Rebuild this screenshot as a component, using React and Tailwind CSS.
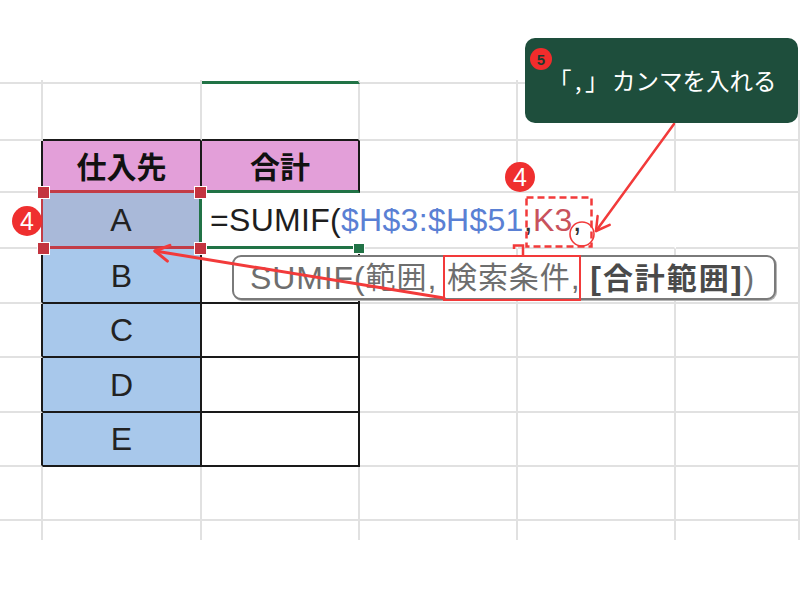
import React from 'react';

const LATIN = "font-['Liberation_Sans','Noto_Sans_CJK_JP',sans-serif]";
const JP = "font-['Noto_Sans_CJK_JP',sans-serif]";

// border colour / width classes per side, written out in full
const RC = {
  g: 'border-r-[#e1e1e1]',
  k: 'border-r-[#1a1a1a]',
  red: 'border-r-[#c33c46]',
  grn: 'border-r-[#217346]',
  none: 'border-r-transparent',
};
const BC = {
  g: 'border-b-[#e1e1e1]',
  k: 'border-b-[#1a1a1a]',
  red: 'border-b-[#c33c46]',
  grn: 'border-b-[#217346]',
  none: 'border-b-transparent',
};
const RW = { 2: 'border-r-2', 3: 'border-r-[3px]' };
const BW = { 0: 'border-b-0', 2: 'border-b-2', 3: 'border-b-[3px]' };

const cellClass = ({ r = 'g', b = 'g', rw = 2, bw = 2, bg = '' } = {}) =>
  `${RW[rw]} ${RC[r]} ${BW[bw]} ${BC[b]} ${bg}`;

const BLUE = 'bg-[#a8c8eb]';
const PINK = 'bg-[#e39fd9]';

const bodyRow = [{ r: 'k' }, { r: 'k', b: 'k', bg: BLUE }, { r: 'k', b: 'k' }, {}, {}, {}];

const rows = [
  [{}, {}, { b: 'grn', bw: 3 }, {}, {}, {}],
  [{}, { b: 'k' }, { b: 'k' }, {}, {}, {}],
  [{ r: 'k' }, { r: 'k', b: 'red', bw: 3, bg: PINK }, { r: 'k', b: 'grn', bw: 3, bg: PINK }, {}, {}, {}],
  [
    { r: 'red' },
    { r: 'grn', rw: 3, b: 'red', bw: 3, bg: 'bg-[#a9b9d9]' },
    { r: 'none', b: 'grn', bw: 3 },
    { r: 'none' },
    { r: 'none' },
    {},
  ],
  bodyRow,
  bodyRow,
  bodyRow,
  bodyRow,
  [{}, {}, {}, {}, {}, {}],
  [{ bw: 0 }, { bw: 0 }, { bw: 0 }, { bw: 0 }, { bw: 0 }, { bw: 0 }],
];

const Formula = () => (
  <div className={`relative z-10 flex h-full items-center whitespace-nowrap pl-[8px] text-[32px] tracking-[0.3px] ${LATIN}`}>
    <span className="text-[#1e1e1e]">=SUMIF(</span>
    <span className="text-[#5a80d4]">$H$3:$H$51</span>
    <span className="text-[#333]">,</span>
    <span className="text-[#c8525c]">K3</span>
    <span className="text-[#333]">,</span>
    <span className="mt-[6px] inline-block h-[50px] w-[7px] bg-[#c8c8c8]" />
  </div>
);

const Letter = ({ children }) => (
  <div className={`flex h-full items-center justify-center text-[32px] text-[#222] ${LATIN}`}>{children}</div>
);

const Head = ({ children }) => (
  <div className={`flex h-full items-center justify-center text-[30px] font-bold text-[#111] ${JP}`}>{children}</div>
);

const content = {
  '2-1': <Head>仕入先</Head>,
  '2-2': <Head>合計</Head>,
  '3-1': <Letter>A</Letter>,
  '3-2': <Formula />,
  '4-1': <Letter>B</Letter>,
  '5-1': <Letter>C</Letter>,
  '6-1': <Letter>D</Letter>,
  '7-1': <Letter>E</Letter>,
};

const Handle = ({ x, y }) => (
  <div
    className="absolute h-[13px] w-[13px] border-[1.5px] border-white bg-[#c3343f]"
    style={{ left: x - 6.5, top: y - 6.5 }}
  />
);

const Badge = ({ x, y }) => (
  <div
    className={`absolute z-30 flex h-[30px] w-[30px] items-center justify-center rounded-full bg-[#ef2f2f] text-[25px] leading-none text-white ${LATIN}`}
    style={{ left: x - 15, top: y - 15 }}
  >
    4
  </div>
);

const RED = '#f23a3a';

const Annotations = () => (
  <svg className="pointer-events-none absolute left-0 top-0 z-30" width="800" height="600" viewBox="0 0 800 600">
    {/* callout arrow */}
    <line x1="674" y1="124" x2="596" y2="231" stroke={RED} strokeWidth="2.5" strokeLinecap="round" />
    <polyline points="609.7,224.9 596,231 597.6,216.1" fill="none" stroke={RED} strokeWidth="2.5" strokeLinecap="round" strokeLinejoin="round" />
    {/* circle around the comma */}
    <circle cx="582" cy="234" r="12" fill="none" stroke={RED} strokeWidth="1.6" />
    {/* dashed box round K3, */}
    <rect x="526.5" y="197.5" width="65" height="49" fill="none" stroke={RED} strokeWidth="2.5" strokeDasharray="7 4" />
    {/* link between the boxes */}
    <polyline points="514,249 514,245.5 523,245.5 523,256" fill="none" stroke={RED} strokeWidth="2.5" />
    {/* 検索条件 box */}
    <rect x="444" y="256" width="136" height="44" fill="none" stroke={RED} strokeWidth="2" />
    {/* long arrow to A */}
    <line x1="444" y1="298" x2="155" y2="251" stroke={RED} strokeWidth="3" strokeLinecap="round" />
    <polyline points="167.4,261.1 155,251 169.9,245.3" fill="none" stroke={RED} strokeWidth="3" strokeLinecap="round" strokeLinejoin="round" />
  </svg>
);

export default function App() {
  return (
    <div className="relative h-[600px] w-[800px] overflow-hidden bg-white">
      <div className="mt-[80px] grid grid-cols-[43px_159px_158px_158px_158px_124px] grid-rows-[4px_57px_52px_56px_55px_54px_55px_54px_54px_19px]">
        {rows.map((cols, r) =>
          cols.map((spec, c) => (
            <div key={`${r}-${c}`} className={cellClass(spec)}>
              {content[`${r}-${c}`]}
            </div>
          ))
        )}
      </div>

      {/* selection handles */}
      <Handle x={43} y={192} />
      <Handle x={200} y={192} />
      <Handle x={43} y={248} />
      <Handle x={200} y={248} />
      <div className="absolute left-[353px] top-[243px] h-[11px] w-[12px] border-[1.5px] border-white bg-[#217346]" />

      {/* function tooltip */}
      <div className={`absolute left-[232px] top-[255px] z-20 flex h-[45px] w-[544px] items-center whitespace-nowrap rounded-[9px] border-2 border-[#7a7a7a] bg-white pl-[16px] text-[32px] tracking-[0.9px] text-[#6e6e6e] shadow-[1px_1px_0_#b5b5b5] ${LATIN}`}>
        <span>SUMIF(</span>
        <span className="text-[30px]">範囲</span>
        <span>,&nbsp;</span>
        <span className="text-[30px]">検索条件</span>
        <span>,&nbsp;</span>
        <span className="font-bold tracking-[2px] text-[#4a4a4a]">[<span className="text-[30px]">合計範囲</span>]</span>
        <span>)</span>
      </div>

      <Annotations />

      <Badge x={27} y={221} />
      <Badge x={520} y={177} />

      {/* callout */}
      <div className="absolute left-[525px] top-[38px] z-40 flex h-[85px] w-[273px] items-center rounded-[10px] bg-[#1e4e3c] pl-[23px]">
        <div className={`absolute left-[5px] top-[10px] flex h-[22px] w-[22px] items-center justify-center rounded-full bg-[#f22c2c] text-[15px] font-bold leading-none text-[#1e3a30] ${LATIN}`}>
          5
        </div>
        <span className={`text-[23.5px] tracking-[3.5px] text-white ${JP}`}>「,」</span>
        <span className={`text-[23.5px] text-white ${JP}`}>カンマを入れる</span>
      </div>
    </div>
  );
}
